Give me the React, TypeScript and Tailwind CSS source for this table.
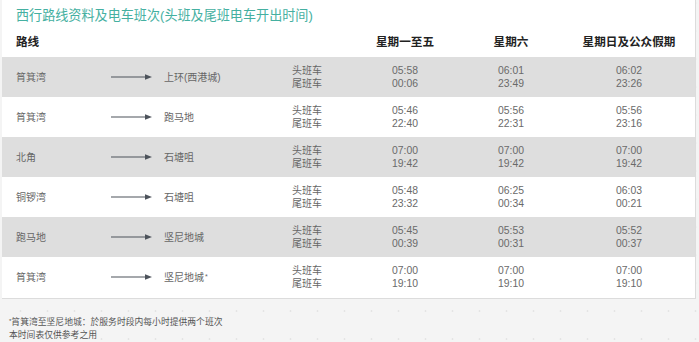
import React from "react";

type Row = { from: string; to: string; star?: boolean; t: [string, string][] };

const rows: Row[] = [
  { from: "筲箕湾", to: "上环(西港城)", t: [["05:58", "00:06"], ["06:01", "23:49"], ["06:02", "23:26"]] },
  { from: "筲箕湾", to: "跑马地", t: [["05:46", "22:40"], ["05:56", "22:31"], ["05:56", "23:16"]] },
  { from: "北角", to: "石塘咀", t: [["07:00", "19:42"], ["07:00", "19:42"], ["07:00", "19:42"]] },
  { from: "铜锣湾", to: "石塘咀", t: [["05:48", "23:32"], ["06:25", "00:34"], ["06:03", "00:21"]] },
  { from: "跑马地", to: "坚尼地城", t: [["05:45", "00:39"], ["05:53", "00:31"], ["05:52", "00:37"]] },
  { from: "筲箕湾", to: "坚尼地城", star: true, t: [["07:00", "19:10"], ["07:00", "19:10"], ["07:00", "19:10"]] },
];

const font = { fontFamily: '"Liberation Sans", "Noto Sans CJK SC", sans-serif' };

function Arrow() {
  return (
    <svg width="42" height="8" viewBox="0 0 42 8" className="block">
      <line x1="0" y1="4" x2="35" y2="4" stroke="#4d535b" strokeWidth="1.2" />
      <polygon points="34,1.3 41,4 34,6.7" fill="#4d535b" />
    </svg>
  );
}

export default function App() {
  return (
    <div
      style={font}
      className="w-[699px] h-[342px] overflow-hidden bg-[#f4f4f4] bg-[radial-gradient(circle,#e4e4e4_0.8px,transparent_1.2px)] bg-[length:27px_28px] bg-[position:7px_-11px]"
    >
      <div className="ml-[2px] w-[694px] bg-white border-r border-b border-[#dcdcdc] overflow-hidden">
        <div className="pl-[14px] pt-[7px] pb-[5px] text-[13.1px] leading-[18px] text-[#45b0a1] whitespace-nowrap">
          西行路线资料及电车班次(头班及尾班电车开出时间)
        </div>
        <div className="flex h-[27px] pt-[5px] text-[11.6px] leading-[14px] font-bold text-[#222] whitespace-nowrap">
          <div className="w-[338px] pl-[14px] shrink-0">路线</div>
          <div className="w-[130px] shrink-0 text-center">星期一至五</div>
          <div className="w-[82px] shrink-0 text-center">星期六</div>
          <div className="w-[154px] shrink-0 text-center">星期日及公众假期</div>
        </div>
        {rows.map((r, i) => (
          <div
            key={i}
            className={
              "flex items-center h-[40px] text-[10px] leading-[13px] text-[#666] whitespace-nowrap " +
              (i % 2 === 0 ? "bg-[#dedede]" : "bg-white")
            }
          >
            <div className="w-[109px] pl-[14px] shrink-0">{r.from}</div>
            <div className="w-[53px] shrink-0 flex items-center">
              <Arrow />
            </div>
            <div className="w-[110px] shrink-0 relative">
              {r.to}
              {r.star && <sup className="text-[7px] relative -top-[2px] ml-[1px]">*</sup>}
            </div>
            <div className="w-[66px] shrink-0 text-center">
              <div>头班车</div>
              <div>尾班车</div>
            </div>
            {r.t.map((p, j) => (
              <div
                key={j}
                className={
                  "shrink-0 text-center text-[10.4px] text-[#6a6a6a] " +
                  (j === 0 ? "w-[130px]" : j === 1 ? "w-[82px]" : "w-[154px]")
                }
              >
                <div>{p[0]}</div>
                <div>{p[1]}</div>
              </div>
            ))}
          </div>
        ))}
        <div className="h-[1px]" />
      </div>
      <div className="pl-[9px] pt-[17px] text-[8.8px] leading-[13px] text-[#555] whitespace-nowrap">
        <div>
          <sup className="text-[6px] relative -top-[2px]">*</sup>筲箕湾至坚尼地城：於服务时段内每小时提供两个班次
        </div>
        <div>本时间表仅供参考之用</div>
      </div>
    </div>
  );
}
